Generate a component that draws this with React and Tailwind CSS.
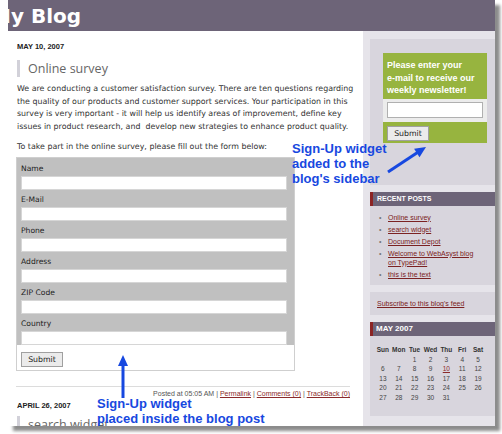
const sans = "font-['Liberation_Sans',Arial,sans-serif]";
const verd = "font-['DejaVu_Sans',Verdana,sans-serif]";

function Field({ label }) {
  return (
    <div className="mb-[3px]">
      <div className={`h-[14px] leading-[14px] text-[7.6px] text-[#222] ${verd}`}>{label}</div>
      <div className="h-[14px] bg-white border border-[#d6d6d6]"></div>
    </div>
  );
}

function SideHead({ children }) {
  return (
    <div className="h-[14px] bg-[#6d6478] border-l-[3px] border-[#8c2424] pl-[4px] text-white font-bold text-[7px] leading-[14px]">
      {children}
    </div>
  );
}

const posts = ["Online survey", "search widget", "Document Depot", "Welcome to WebAsyst blog on TypePad!", "this is the text"];
const days = ["Sun", "Mon", "Tue", "Wed", "Thu", "Fri", "Sat"];
const cal = [
  ["", "", "1", "2", "3", "4", "5"],
  ["6", "7", "8", "9", "10", "11", "12"],
  ["13", "14", "15", "16", "17", "18", "19"],
  ["20", "21", "22", "23", "24", "25", "26"],
  ["27", "28", "29", "30", "31", "", ""],
];

export default function App() {
  return (
    <div className={`relative w-[502px] h-[434px] bg-white overflow-hidden ${sans}`}>
      <div className="ml-[8px] w-[487px] h-[426px] overflow-hidden bg-white shadow-[5px_5px_3px_rgba(0,0,0,0.45)] flex flex-col">
        <header className="h-[31px] shrink-0 bg-[#6d6478] overflow-visible">
          <div className="ml-[-17px] pt-[2px] leading-[29px] text-white font-bold text-[20px] whitespace-nowrap font-['DejaVu_Sans',sans-serif]">
            My Blog
          </div>
        </header>
        <div className="flex flex-1 min-h-0">
          <main className="w-[355px] shrink-0 pl-[9px] pr-[11px] overflow-hidden">
            <div className="mt-[11px] h-[10px] leading-[10px] text-[7.5px] font-bold text-[#222]">MAY 10, 2007</div>
            <div className="mt-[8px] h-[17px] border-l-[3px] border-[#d2d1d9] pl-[8px] leading-[17px] text-[12.5px] text-[#666] font-['Open_Sans',sans-serif]">
              Online survey
            </div>
            <p className={`mt-[6px] text-[7.9px] leading-[12.67px] text-[#333] whitespace-nowrap ${verd}`}>
              We are conducting a customer satisfaction survey. There are ten questions regarding<br />
              the quality of our products and customer support services. Your participation in this<br />
              survey is very important - it will help us identify areas of improvement, define key<br />
              issues in product research, and&nbsp; develop new strategies to enhance product quality.
            </p>
            <p className={`mt-[7px] text-[7.9px] leading-[12.67px] text-[#333] whitespace-nowrap ${verd}`}>
              To take part in the online survey, please fill out the form below:
            </p>
            <div className="mt-[4px] ml-[-1px] w-[279px] border border-[#cfcfcf]">
              <div className="bg-[#c0c0c0] pt-[4px] pb-[0px] pl-[4px] pr-[7px]">
                {["Name", "E-Mail", "Phone", "Address", "ZIP Code", "Country"].map((l) => (
                  <Field key={l} label={l} />
                ))}
              </div>
              <div className="h-[22px] bg-white pl-[4px] pt-[4px]">
                <div className={`w-[42px] h-[15px] bg-[#ebebeb] border border-[#a0a0a0] text-[7.8px] leading-[13px] text-center text-[#222] ${verd}`}>
                  Submit
                </div>
              </div>
            </div>
            <div className="mt-[15px] ml-[-1px] mr-[2px] h-px bg-[#dcdcdc]"></div>
            <div className="mt-[2px] mr-[2px] h-[10px] leading-[10px] text-[7px] text-[#555] text-right whitespace-nowrap">
              Posted at 05:05 AM | <span className="underline text-[#8b2a2a]">Permalink</span> |{" "}
              <span className="underline text-[#8b2a2a]">Comments (0)</span> |{" "}
              <span className="underline text-[#8b2a2a]">TrackBack (0)</span>
            </div>
            <div className="mt-[2px] h-[10px] leading-[10px] text-[7.5px] font-bold text-[#222]">APRIL 26, 2007</div>
            <div className="mt-[5px] h-[17px] border-l-[3px] border-[#d2d1d9] pl-[8px] leading-[17px] text-[12.5px] text-[#666] font-['Open_Sans',sans-serif]">
              search widget
            </div>
          </main>
          <aside className="w-[132px] bg-[#e6e4ea] pl-[7px] pt-[8px] flex flex-col gap-[7px]">
            <div className="bg-[#d8d5dd] h-[146px] pl-[13px] pt-[14px]">
              <div className="w-[104px] bg-[#97b43f]">
                <div className="pl-[4px] pt-[6px] pb-[2.5px] text-white font-bold text-[9px] leading-[12.5px] whitespace-nowrap">
                  Please enter your<br />e-mail to receive our<br />weekly newsletter!
                </div>
                <div className="h-[23px] bg-[#ececec] pl-[4px] pt-[3px]">
                  <div className="w-[96px] h-[16px] bg-white border border-[#b0b0b0]"></div>
                </div>
                <div className="h-[21px] pl-[4px] pt-[4px]">
                  <div className={`w-[42px] h-[15px] bg-[#ebebeb] border border-[#a0a0a0] text-[7.8px] leading-[13px] text-center text-[#222] ${verd}`}>
                    Submit
                  </div>
                </div>
              </div>
            </div>
            <div className="bg-[#d8d5dd]">
              <SideHead>RECENT POSTS</SideHead>
              <ul className="pt-[6.5px] pb-[6.5px] pl-[9px] flex flex-col gap-[3px]">
                {posts.map((p) => (
                  <li key={p} className="flex text-[7px] leading-[9px]">
                    <span className="w-[9px] shrink-0 text-[#777]">•</span>
                    <span className="underline text-[#7b2222] w-[90px]">{p}</span>
                  </li>
                ))}
              </ul>
            </div>
            <div className="bg-[#d8d5dd] h-[23px] pl-[7px] leading-[23px] text-[7px] text-[#7b2222] underline">
              Subscribe to this blog's feed
            </div>
            <div className="bg-[#d8d5dd] pb-[13px]">
              <div className="h-[14px] bg-[#6d6478] border-l-[3px] border-[#8c2424] pl-[3px] text-white font-bold text-[8px] leading-[14px]">
                MAY 2007
              </div>
              <div className="ml-[5px] mt-[9px] w-[111px] grid grid-cols-7 text-[6.5px] leading-[9.6px] text-center text-[#444]">
                {days.map((d) => (
                  <div key={d} className="font-bold text-[#333]">{d}</div>
                ))}
                {cal.flat().map((d, i) => (
                  <div key={i} className={d === "10" ? "underline text-[#8b2a2a]" : ""}>{d}</div>
                ))}
              </div>
            </div>
          </aside>
        </div>
      </div>

      <div className="absolute left-[292px] top-[141px] text-[13px] leading-[15px] font-bold text-[#1748e0] whitespace-nowrap">
        Sign-Up widget<br />added to the<br />blog's sidebar
      </div>
      <div className="absolute left-[97px] top-[396px] text-[13px] leading-[15px] font-bold text-[#1748e0] whitespace-nowrap">
        Sign-Up widget<br />placed inside the blog post
      </div>
      <svg className="absolute left-0 top-0 pointer-events-none" width="502" height="434" viewBox="0 0 502 434">
        <line x1="388" y1="172" x2="417.5" y2="152.6" stroke="#1748e0" strokeWidth="3" />
        <polygon points="426,147 419.5,157.2 414.1,148.8" fill="#1748e0" />
        <line x1="123" y1="398" x2="123" y2="365" stroke="#1748e0" strokeWidth="3" />
        <polygon points="123,355 128,366 118,366" fill="#1748e0" />
      </svg>
    </div>
  );
}
